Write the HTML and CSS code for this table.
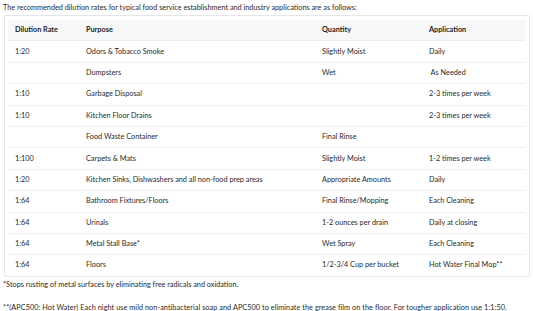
FILE: index.html
```html
<!DOCTYPE html>
<html>
<head>
<meta charset="utf-8">
<link rel="stylesheet" href="styles.css">
</head>
<body>
<p class="intro">The recommended dilution rates for typical food service establishment and industry applications are as follows:</p>
<div class="box">
<table class="rates">
<colgroup><col class="c1"><col class="c2"><col class="c3"><col class="c4"></colgroup>
<thead>
<tr><th>Dilution Rate</th><th>Purpose</th><th>Quantity</th><th>Application</th></tr>
</thead>
<tbody>
<tr><td>1:20</td><td>Odors &amp; Tobacco Smoke</td><td>Slightly Moist</td><td>Daily</td></tr>
<tr><td></td><td>Dumpsters</td><td>Wet</td><td>&nbsp;As Needed</td></tr>
<tr><td>1:10</td><td>Garbage Disposal</td><td></td><td>2-3 times per week</td></tr>
<tr><td>1:10</td><td>Kitchen Floor Drains</td><td></td><td>2-3 times per week</td></tr>
<tr><td></td><td>Food Waste Container</td><td>Final Rinse</td><td></td></tr>
<tr><td>1:100</td><td>Carpets &amp; Mats</td><td>Slightly Moist</td><td>1-2 times per week</td></tr>
<tr><td>1:20</td><td>Kitchen Sinks, Dishwashers and all non-food prep areas</td><td>Appropriate Amounts</td><td>Daily</td></tr>
<tr><td>1:64</td><td>Bathroom Fixtures/Floors</td><td>Final Rinse/Mopping</td><td>Each Cleaning</td></tr>
<tr><td>1:64</td><td>Urinals</td><td>1-2 ounces per drain</td><td>Daily at closing</td></tr>
<tr><td>1:64</td><td>Metal Stall Base*</td><td>Wet Spray</td><td>Each Cleaning</td></tr>
<tr><td>1:64</td><td>Floors</td><td>1/2-3/4 Cup per bucket</td><td>Hot Water Final Mop**</td></tr>
</tbody>
</table>
</div>
<p class="note">*Stops rusting of metal surfaces by eliminating free radicals and oxidation.</p>
<p class="note note2">**(APC500: Hot Water) Each night use mild non-antibacterial soap and APC500 to eliminate the grease film on the floor. For tougher application use 1:1:50.</p>
</body>
</html>
```
FILE: styles.css
```css
html, body {
  margin: 0;
  padding: 0;
  background: #ffffff;
}
body {
  font-family: Lato, "Open Sans", sans-serif;
  font-size: 7.3px;
  color: #2a2a2a;
  padding: 4px 3px 0 3px;
}
p {
  margin: 0;
}
.intro {
  line-height: 8px;
}
.box {
  margin: 3px 0 0 1px;
  border: 1px solid #e6e6e6;
  border-radius: 2px;
  padding: 4px 3px 0 3px;
}
.rates {
  width: 100%;
  border-collapse: collapse;
  table-layout: fixed;
}
.c1 { width: 71px; }
.c2 { width: 236px; }
.c3 { width: 107px; }
.c4 { width: auto; }
.rates th,
.rates td {
  text-align: left;
  padding: 0 0 0 7px;
  height: 20.4px;
  line-height: 8px;
  white-space: nowrap;
  vertical-align: middle;
}
.rates th {
  background: #f6f7f9;
  font-weight: bold;
  color: #222222;
  border-bottom: 1px solid #eeeeee;
}
.rates tbody tr td {
  border-bottom: 1px solid #efefef;
}
.rates tbody tr:last-child td {
  border-bottom: none;
}
.note {
  margin-top: 4px;
  line-height: 8px;
}
.note2 {
  margin-top: 15px;
  letter-spacing: 0.05px;
}
```
